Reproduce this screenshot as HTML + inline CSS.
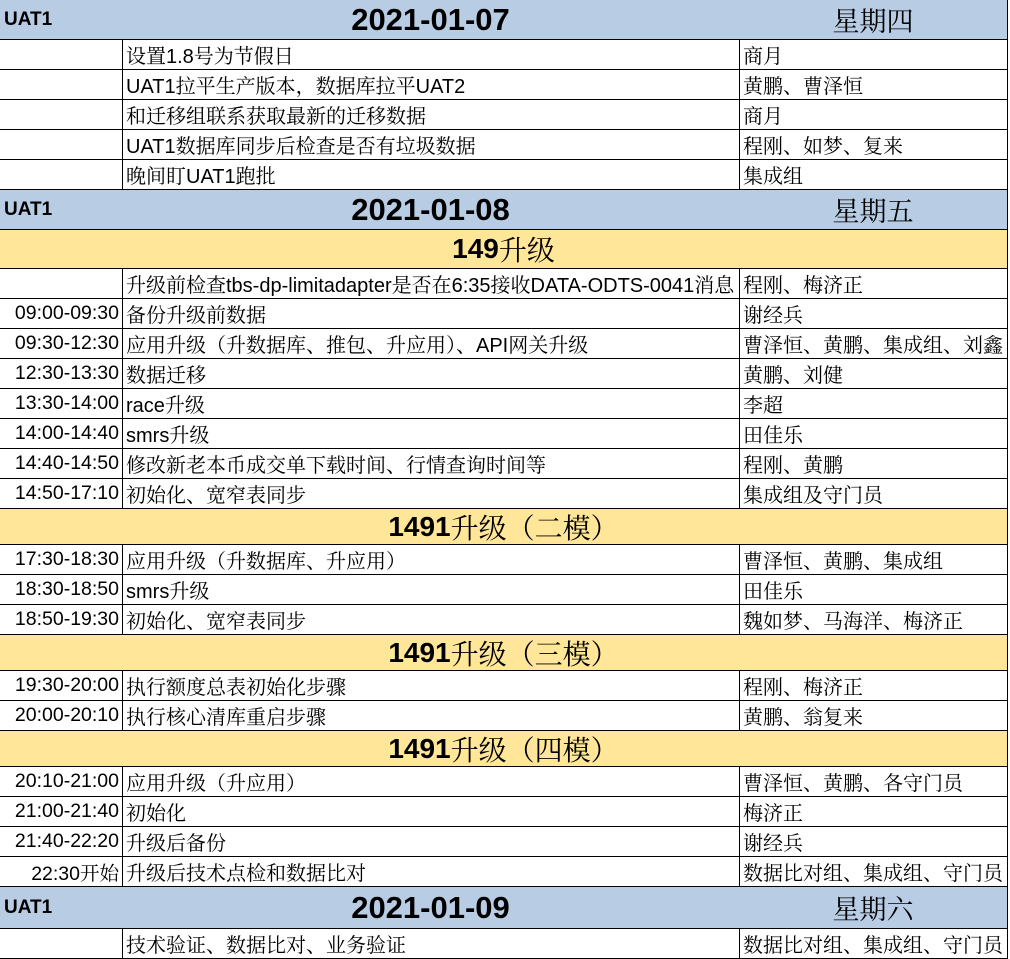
<!DOCTYPE html>
<html><head><meta charset="utf-8">
<style>
html,body{margin:0;padding:0;background:#fff;}
body{width:1010px;height:958px;position:relative;overflow:hidden;font-family:"Liberation Sans","Noto Serif CJK SC",serif;color:#000;}
.c{position:absolute;box-sizing:border-box;border-right:1px solid #000;border-bottom:1px solid #000;display:flex;align-items:center;font-size:20px;white-space:nowrap;overflow:hidden;}
.l{padding-left:4px;}
.r{justify-content:flex-end;padding-right:3px;font-size:19.5px;}
.m{justify-content:center;}
.b{background:#b8cce4;}
.y{background:#ffe699;}
.u{font-weight:bold;font-size:19px;font-family:"Liberation Sans",sans-serif;padding-left:4px;}
.d{font-weight:bold;font-size:31px;font-family:"Liberation Sans",sans-serif;}
.w{font-size:27px;}
.yt{font-size:28px;}
.yt b{font-family:"Liberation Sans",sans-serif;}
</style></head><body>
<div id="t"></div>
<script>
var rows=[
['h',0,40,'UAT1','2021-01-07','星期四'],
['n',40,30,'','设置1.8号为节假日','商月'],
['n',70,30,'','UAT1拉平生产版本，数据库拉平UAT2','黄鹏、曹泽恒'],
['n',100,30,'','和迁移组联系获取最新的迁移数据','商月'],
['n',130,30,'','UAT1数据库同步后检查是否有垃圾数据','程刚、如梦、复来'],
['n',160,30,'','晚间盯UAT1跑批','集成组'],
['h',190,40,'UAT1','2021-01-08','星期五'],
['y',230,39,'<b>149</b>升级'],
['n',269,30,'','升级前检查tbs-dp-limitadapter是否在6:35接收DATA-ODTS-0041消息','程刚、梅济正'],
['n',299,30,'09:00-09:30','备份升级前数据','谢经兵'],
['n',329,30,'09:30-12:30','应用升级（升数据库、推包、升应用）、API网关升级','曹泽恒、黄鹏、集成组、刘鑫'],
['n',359,30,'12:30-13:30','数据迁移','黄鹏、刘健'],
['n',389,30,'13:30-14:00','race升级','李超'],
['n',419,30,'14:00-14:40','smrs升级','田佳乐'],
['n',449,30,'14:40-14:50','修改新老本币成交单下载时间、行情查询时间等','程刚、黄鹏'],
['n',479,30,'14:50-17:10','初始化、宽窄表同步','集成组及守门员'],
['y',509,36,'<b>1491</b>升级（二模）'],
['n',545,30,'17:30-18:30','应用升级（升数据库、升应用）','曹泽恒、黄鹏、集成组'],
['n',575,30,'18:30-18:50','smrs升级','田佳乐'],
['n',605,30,'18:50-19:30','初始化、宽窄表同步','魏如梦、马海洋、梅济正'],
['y',635,36,'<b>1491</b>升级（三模）'],
['n',671,30,'19:30-20:00','执行额度总表初始化步骤','程刚、梅济正'],
['n',701,30,'20:00-20:10','执行核心清库重启步骤','黄鹏、翁复来'],
['y',731,36,'<b>1491</b>升级（四模）'],
['n',767,30,'20:10-21:00','应用升级（升应用）','曹泽恒、黄鹏、各守门员'],
['n',797,30,'21:00-21:40','初始化','梅济正'],
['n',827,30,'21:40-22:20','升级后备份','谢经兵'],
['n',857,30,'22:30开始','升级后技术点检和数据比对','数据比对组、集成组、守门员'],
['h',887,42,'UAT1','2021-01-09','星期六'],
['n',929,30,'','技术验证、数据比对、业务验证','数据比对组、集成组、守门员']
];
var h='';
function cell(cls,x,y,w,ht,txt){h+='<div class="c '+cls+'" style="left:'+x+'px;top:'+y+'px;width:'+w+'px;height:'+ht+'px">'+txt+'</div>';}
rows.forEach(function(r){
 var y=r[1],ht=r[2];
 if(r[0]=='h'){cell('b u',0,y,123,ht,r[3]);cell('b m d',122,y,618,ht,r[4]);cell('b m w',739,y,269,ht,r[5]);}
 else if(r[0]=='y'){cell('y m yt',0,y,1008,ht,r[3]);}
 else{cell('r',0,y,123,ht,r[3]);cell('l',122,y,618,ht,r[4]);cell('l',739,y,269,ht,r[5]);}
});
document.getElementById('t').innerHTML=h;
</script>
</body></html>
